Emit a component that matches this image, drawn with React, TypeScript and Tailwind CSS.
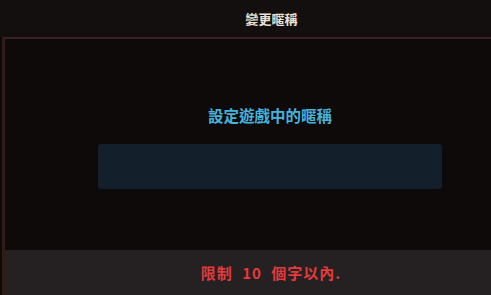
import React from "react";

export default function App() {
  const font = { fontFamily: '"Noto Sans CJK TC", "Noto Sans", sans-serif' };
  return (
    <div className="w-[491px] h-[295px] bg-[#0d0a0a] flex flex-col overflow-hidden" style={font}>
      <div className="h-[37px] shrink-0 bg-[#130f0f] flex items-center justify-center pl-[52px]">
        <span className="text-[13px] font-bold text-[#e9e2d3] leading-none">變更暱稱</span>
      </div>
      <div className="flex-1 ml-[2px] border-l-[3px] border-l-[#2e1c17] border-t-[2px] border-t-[#3a1f24] flex flex-col">
        <div className="flex-1 bg-[#0e0a0a] flex flex-col items-center pl-[44px] pt-[66px]">
          <div className="text-[15.5px] font-bold text-[#45b3dc] leading-[20px]">設定遊戲中的暱稱</div>
          <div className="mt-[19px] w-[344px] h-[45px] rounded-[3px] bg-[#13202b]"></div>
        </div>
        <div className="h-[45px] shrink-0 bg-[#252021] flex items-center justify-center pl-[46px]">
          <span className="text-[15px] font-bold text-[#e23b3d] leading-none tracking-[1px] [word-spacing:5px]">限制 10 個字以內.</span>
        </div>
      </div>
    </div>
  );
}
